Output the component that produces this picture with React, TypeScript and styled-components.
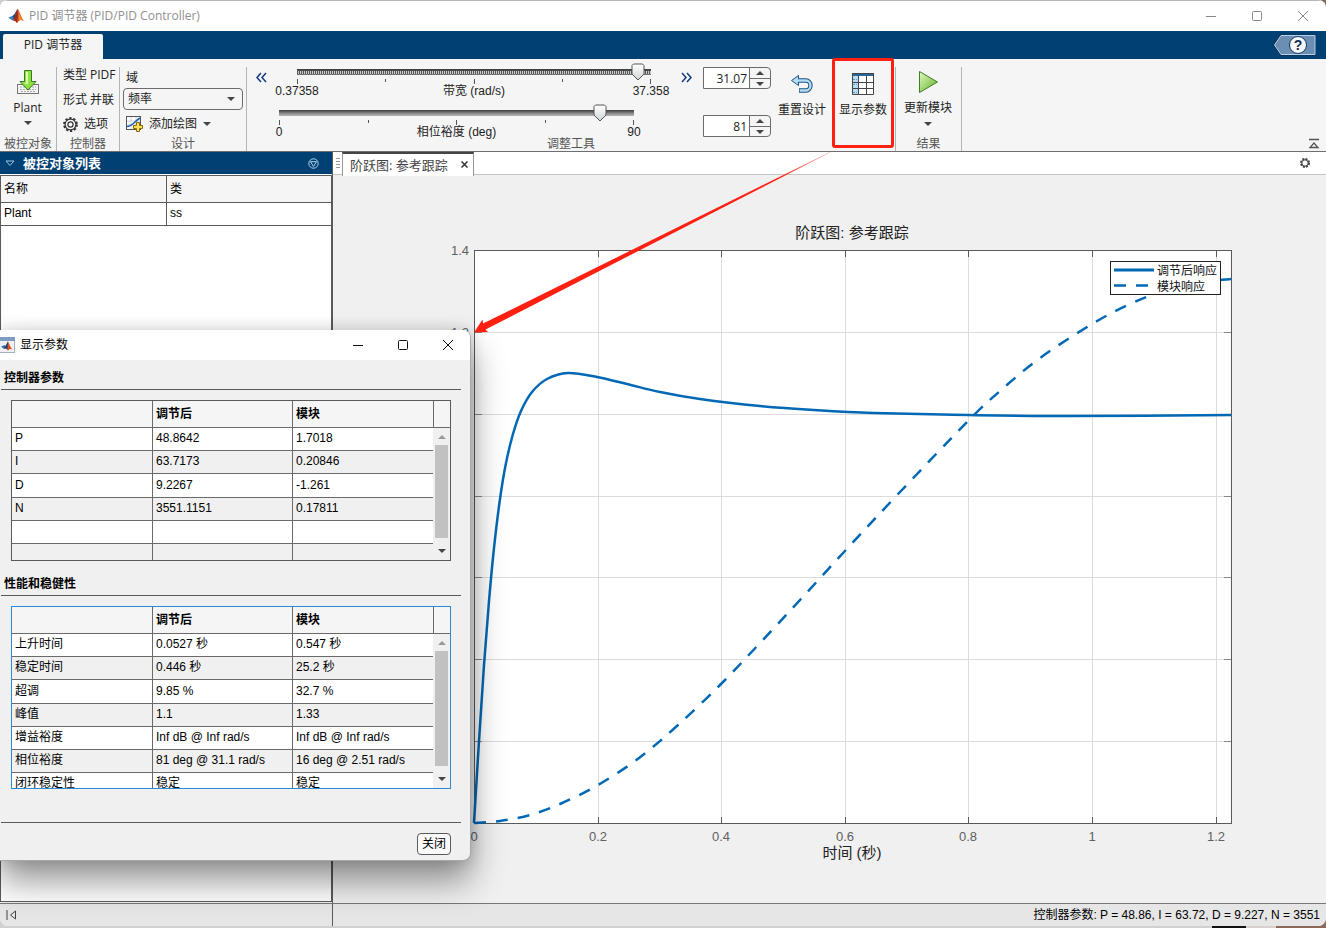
import React, { useState } from 'react';
import styled, { createGlobalStyle, css } from 'styled-components';

const ui = '"Open Sans", "Noto Sans CJK SC", sans-serif';
const arial = '"Liberation Sans", "Noto Sans CJK SC", sans-serif';
const navy = '#004073';
const line = '#5a5a5a';
const blue = '#0068b5';
const red = '#ff2012';

const GlobalStyle = createGlobalStyle`
  *, *::before, *::after { box-sizing: border-box; }
  html, body, #root { height: 100%; }
  body { margin: 0; background: linear-gradient(to left, #8c6a5a 50px, #d8d0cc 50px, #d8d0cc 80px, #111 80px, #111 114px, #d0d0d0 114px); overflow: hidden; }
  button, input, select { font: inherit; color: inherit; margin: 0; padding: 0; }
  button { background: none; border: 0; }
  svg { display: block; flex: none; }
`;

const AppWindow = styled.div`
  position: relative;
  display: flex;
  flex-direction: column;
  height: calc(100vh - 2px);
  min-height: 880px;
  border-radius: 8px;
  overflow: hidden;
  background: #f0f0f0;
  font: 12px/16px ${ui};
  color: #222;
`;

const TitleBar = styled.header`
  display: flex;
  align-items: center;
  height: 31px;
  padding: 0 16px 0 8px;
  gap: 5px;
  background: #fff;
  border-top: 1px solid #b8b8b8;
  color: #909090;
`;

const Title = styled.h1`
  flex: 1;
  margin: 0;
  font: inherit;
`;

const CaptionButtons = styled.div<{ $gap: number }>`
  display: flex;
  align-items: center;
  gap: ${(p) => p.$gap}px;
`;

const CaptionButton = styled.button`
  display: grid;
  place-items: center;
  width: 14px;
  height: 14px;
`;

const TabBand = styled.nav`
  display: flex;
  align-items: center;
  justify-content: space-between;
  height: 28px;
  padding: 0 9px 0 3px;
  background: ${navy};
`;

const RibbonTab = styled.button`
  align-self: flex-end;
  width: 100px;
  height: 25px;
  padding-bottom: 3px;
  border-radius: 2px 2px 0 0;
  background: #f5f5f5;
`;

const Toolstrip = styled.div`
  display: flex;
  flex: none;
  position: relative;
  height: 93px;
  padding-top: 8px;
  background: #f5f5f5;
  border-bottom: 1px solid #6e6e6e;
`;

const Section = styled.section<{ $width: number }>`
  display: flex;
  flex-direction: column;
  width: ${(p) => p.$width}px;
  border-right: 1px solid #b4b4b4;
`;

const SectionBody = styled.div<{ $row?: boolean; $pad?: string }>`
  display: flex;
  flex: 1;
  flex-direction: ${(p) => (p.$row ? 'row' : 'column')};
  padding: ${(p) => p.$pad ?? '0'};
  min-height: 0;
`;

const SectionLabel = styled.h2`
  margin: 0;
  font: inherit;
  line-height: 14px;
  text-align: center;
  white-space: nowrap;
  color: #555;
`;

const ToolButton = styled.button<{ $width: number; $top: number; $gap: number }>`
  display: flex;
  position: relative;
  flex-direction: column;
  align-items: center;
  gap: ${(p) => p.$gap}px;
  width: ${(p) => p.$width}px;
  padding-top: ${(p) => p.$top}px;
  white-space: nowrap;
`;

const Highlight = styled.span`
  position: absolute;
  inset: -9px 0 auto;
  height: 90px;
  border: 3px solid ${red};
  border-radius: 3px;
`;

const Line = styled.div<{ $height: number; $gap?: number }>`
  display: flex;
  align-items: center;
  gap: ${(p) => p.$gap ?? 3}px;
  height: ${(p) => p.$height}px;
  white-space: nowrap;
`;

const FlatButton = styled.button<{ $gap: number; $height: number }>`
  display: flex;
  align-items: center;
  gap: ${(p) => p.$gap}px;
  height: ${(p) => p.$height}px;
  white-space: nowrap;
`;

const SelectBox = styled.div`
  display: grid;
  align-items: center;
  margin: 0 0 0 -3px;
  width: 120px;
  height: 22px;
  & > * { grid-area: 1 / 1; }
  & > svg { justify-self: end; margin-right: 8px; pointer-events: none; }
`;

const Select = styled.select`
  appearance: none;
  width: 100%;
  height: 22px;
  padding-left: 4px;
  border: 1px solid #6b6b6b;
  border-radius: 4px;
  background: #f5f5f5;
`;

const Sliders = styled.div`
  display: flex;
  flex-direction: column;
  width: 445px;
`;

const SliderLine = styled.div<{ $indent: number }>`
  display: flex;
  flex: none;
  gap: 30px;
  height: 41px;
  padding-left: ${(p) => p.$indent}px;
`;

const Chevron = styled.button`
  width: 11px;
  height: 20px;
`;

const SliderBox = styled.div`
  position: relative;
  width: 355px;
`;

const Range = styled.input<{ $dotted?: boolean }>`
  display: block;
  appearance: none;
  width: 100%;
  height: 20px;
  background: linear-gradient(#3c3c3c, #8e8e8e 60%, #b4b4b4) 0 2px / 100% 6px no-repeat;
  ${(p) => p.$dotted && css`
    background:
      repeating-linear-gradient(90deg, #555 0 1px, #ccc 1px 2px) 0 4px / 100% 3px no-repeat,
      linear-gradient(#3c3c3c, #777) 0 2px / 100% 6px no-repeat;
  `}
  &::-webkit-slider-thumb { appearance: none; width: 13px; height: 20px; opacity: 0; }
`;

const Thumb = styled.svg`
  position: absolute;
  top: -4px;
  margin-left: -6px;
  pointer-events: none;
`;

const Ticks = styled.div`
  display: flex;
  justify-content: space-between;
  height: 5px;
  margin-top: -8px;
`;

const Tick = styled.i<{ $short: boolean }>`
  width: 1px;
  height: ${(p) => (p.$short ? 3 : 5)}px;
  background: #555;
`;

const Scale = styled.div`
  display: flex;
  justify-content: space-between;
  font: 12px/14px ${arial};
  & > * { width: 0; display: flex; justify-content: center; white-space: nowrap; }
`;

const Spinners = styled.div`
  display: flex;
  flex-direction: column;
  gap: 26px;
  width: 80px;
  padding-left: 11px;
`;

const Spinner = styled.div`
  display: grid;
  grid-template-columns: 46px 20px;
  width: 68px;
  height: 22px;
  border: 1px solid #6b6b6b;
  border-radius: 0 4px 4px 0;
`;

const SpinnerInput = styled.input`
  width: 46px;
  min-width: 0;
  padding: 2px 2px 0 0;
  border: 0;
  border-right: 1px solid #6b6b6b;
  background: #fff;
  text-align: right;
`;

const SpinnerButtons = styled.div`
  display: grid;
  grid-template-rows: 10px 10px;
  & > * + * { border-top: 1px solid #6b6b6b; }
`;

const SpinnerButton = styled.button`
  display: grid;
  place-items: center;
`;

const CollapseButton = styled.button`
  align-self: flex-end;
  margin: 0 6px 2px auto;
`;

const Workspace = styled.main`
  display: flex;
  flex: 1;
  min-height: 0;
`;

const Sidebar = styled.aside`
  display: flex;
  flex-direction: column;
  width: 333px;
  padding-bottom: 1px;
  border-right: 1px solid ${line};
`;

const SidebarHead = styled.div`
  display: flex;
  align-items: center;
  height: 23px;
  padding: 0 13px 0 5px;
  gap: 8px;
  background: ${navy};
  border-bottom: 1px solid #fff;
  color: #fff;
`;

const SidebarTitle = styled.h2`
  flex: 1;
  margin: 0;
  font: bold 13px/20px ${ui};
`;

const SidebarBody = styled.div`
  flex: 1;
  background: #fff;
  border: 1px solid ${line};
`;

const PlantTable = styled.table`
  width: 100%;
  table-layout: fixed;
  border-spacing: 0;
  font: 12px/14px ${arial};
  color: #000;
  th, td { padding: 0 0 3px 3px; height: 23px; border-bottom: 1px solid ${line}; text-align: left; }
  th { height: 27px; padding-bottom: 1px; background: #f5f5f5; font-weight: normal; }
  th + th, td + td { border-left: 1px solid ${line}; }
`;

const FigurePane = styled.div`
  display: flex;
  flex: 1;
  flex-direction: column;
  position: relative;
  min-width: 0;
`;

const DocBar = styled.div`
  display: flex;
  align-items: center;
  flex: none;
  height: 23px;
  padding: 0 16px 0 3px;
  background: #fff;
  border-bottom: 1px solid #c4c4c4;
`;

const DocTab = styled.div`
  display: flex;
  align-items: center;
  justify-content: space-between;
  width: 132px;
  height: 24px;
  margin: 1px auto 0 2px;
  padding: 0 5px 0 7px;
  border: solid #999;
  border-width: 2px 1px 0;
  border-top-color: #444;
  background: #fff;
  font-size: 13px;
  color: #444;
  white-space: nowrap;
`;

const Figure = styled.svg`
  flex: 1;
  width: 100%;
  min-height: 0;
`;

const CalloutArrow = styled.svg`
  position: absolute;
  top: 0;
  left: 0;
  z-index: 3;
  pointer-events: none;
`;

const StatusBar = styled.footer`
  display: flex;
  flex: none;
  height: 23px;
  border-top: 1px solid #777;
  background: #e6e6e6;
  font: 12px/23px ${arial};
  color: #000;
`;

const StatusLeft = styled.div`
  display: flex;
  align-items: center;
  width: 333px;
  padding-left: 6px;
  border-right: 1px solid ${line};
`;

const StatusText = styled.div`
  flex: 1;
  padding-right: 6px;
  text-align: right;
`;

const Dialog = styled.div`
  position: absolute;
  left: 0;
  top: 330px;
  z-index: 2;
  width: 471px;
  padding-bottom: 5px;
  border: solid #a8a8a8;
  border-width: 0 1px 1px 0;
  border-radius: 0 8px 8px 0;
  background: #f0f0f0;
  box-shadow: 0 20px 34px rgba(0, 0, 0, 0.42), 0 0 16px rgba(0, 0, 0, 0.14);
  color: #000;
`;

const DialogBar = styled.div`
  display: flex;
  align-items: center;
  height: 30px;
  padding-right: 15px;
  gap: 5px;
  border-radius: 0 8px 0 0;
  background: #fff;
`;

const DialogTitle = styled.h2`
  flex: 1;
  margin: 0;
  font: inherit;
`;

const GroupTitle = styled.h3`
  margin: 0 9px 10px 1px;
  padding: 9px 0 3px 3px;
  border-bottom: 1px solid ${line};
  font: bold 12px/17px ${ui};
`;

const TableFrame = styled.div<{ $height: number; $color: string; $after: number }>`
  position: relative;
  width: 440px;
  height: ${(p) => p.$height}px;
  margin: 0 0 ${(p) => p.$after}px 11px;
  border: 1px solid ${(p) => p.$color};
  overflow: hidden;
  background: #f0f0f0;
`;

const DataTable = styled.table`
  width: 438px;
  table-layout: fixed;
  border-spacing: 0;
  font: 12px/14px ${arial};
  th, td { height: 23px; padding: 0 0 2px 3px; border: solid #6a6a6a; border-width: 0 1px 1px 0; text-align: left; white-space: nowrap; }
  th { height: 27px; padding-bottom: 1px; background: #f5f5f5; font-weight: bold; }
  th:last-child { border-right: 0; }
  td:nth-child(3) { border-right: 0; }
  td:nth-child(4) { border: 0; }
  tbody tr:nth-child(odd) td { background: #fff; }
  tbody tr:nth-child(3) td { height: 24px; }
`;

const ScrollBar = styled.div`
  position: absolute;
  top: 27px;
  right: 0;
  bottom: 0;
  width: 17px;
  display: flex;
  flex-direction: column;
  align-items: center;
  justify-content: space-between;
  padding: 7px 0;
  background: #f0f0f0;
`;

const ScrollThumb = styled.div`
  flex: 1;
  width: 13px;
  margin: 6px 0 11px;
  background: #c1c1c1;
`;

const DialogFoot = styled.div`
  display: flex;
  justify-content: flex-end;
  margin: 0 9px 0 1px;
  padding: 10px 10px 0 0;
  border-top: 1px solid ${line};
`;

const CloseButton = styled.button`
  width: 34px;
  height: 22px;
  border: 1px solid ${line};
  border-radius: 4px;
  background: #fafafa;
`;

const MatlabLogo = ({ size }: { size: number }) => (
  <svg width={size} height={size} viewBox="0 0 16 16" aria-hidden="true">
    <path d="M0.2 9.800 4.600 7.800 7 10 4.600 12.600z" fill="#3d7fb8" />
    <path d="M4.600 7.800C6.500 7 7.600 3.200 9.600 1L7.600 9.200 6 11.400z" fill="#20477e" />
    <path d="M9.600 1C11.200 2 12.600 8 15.800 13 13 11 11.500 11.800 9 15.200 8 13.200 7.200 12.200 4.800 12.600 7.600 9.600 7.800 4.400 9.600 1z" fill="#dd5a24" />
    <path d="M9.600 1C10.400 5 9.800 10.500 9 15.200 7.800 13 7 12.200 4.800 12.600 7.600 9.600 7.800 4.400 9.600 1z" fill="#a1261c" />
    <path d="M10.600 3C11.400 6 12.400 9.400 15.800 13 13.600 11.600 12 11.600 10.800 12.800z" fill="#f08a2a" />
  </svg>
);

const CaptionIcons = ({ gap, color }: { gap: number; color: string }) => (
  <CaptionButtons $gap={gap}>
    <CaptionButton aria-label="Minimize"><svg width="10" height="10" stroke={color} fill="none"><path d="M0 5.5h10" /></svg></CaptionButton>
    <CaptionButton aria-label="Maximize"><svg width="10" height="10" stroke={color} fill="none"><rect x="0.5" y="0.5" width="9" height="9" rx="1" /></svg></CaptionButton>
    <CaptionButton aria-label="Close"><svg width="12" height="12" stroke={color} fill="none"><path d="M1 1l10 10M11 1L1 11" /></svg></CaptionButton>
  </CaptionButtons>
);

const Arrow = ({ up, color = '#444' }: { up?: boolean; color?: string }) => (
  <svg width="8" height="4" fill={color} aria-hidden="true"><path d={up ? 'M0 4h8L4 0z' : 'M0 0h8L4 4z'} /></svg>
);

const DownloadIcon = () => (
  <svg width="24" height="26" viewBox="0 0 24 26">
    <rect x="1.500" y="15.500" width="21" height="9" fill="#f4f4f4" stroke="#777" />
    <path d="M4 18h16M4 20.500h16M5 22.500h14" stroke="#aaa" strokeDasharray="2 1" />
    <path d="M8.500 1.500h7v11h4.500L12 21 4 12.500h4.500z" fill="#8fe042" stroke="#2f7d1c" />
    <path d="M10 3h2v12H8l2-1z" fill="#dcf9b0" />
  </svg>
);

const GearIcon = () => (
  <svg width="15" height="15" viewBox="0 0 15 15" fill="none" stroke="#333">
    <circle cx="7.500" cy="7.500" r="6.500" strokeWidth="1.800" strokeDasharray="2.300 1.784" />
    <circle cx="7.500" cy="7.500" r="5.400" strokeWidth="1.200" />
    <circle cx="7.500" cy="7.500" r="2.600" strokeWidth="1.200" />
  </svg>
);

const AddPlotIcon = () => (
  <svg width="17" height="16" viewBox="0 0 17 16">
    <rect x="0.500" y="0.500" width="14" height="13" fill="#fff" stroke="#555" />
    <path d="M1 5h13M1 9h13M5 1v12M10 1v12" stroke="#ccd" />
    <path d="M1 10.500C6 10.500 9 5 14 2" fill="none" stroke="#1d5fa8" strokeWidth="1.600" />
    <path d="M10.500 6.500h3v3h3v3h-3v3h-3v-3h-3v-3h3z" fill="#ffe34d" stroke="#8a6a10" />
  </svg>
);

const UndoIcon = () => (
  <svg width="24" height="20" viewBox="0 0 24 20" fill="none" strokeLinejoin="round">
    <path d="M7 6.500H16a4.500 5 0 0 1 0 10H9" stroke="#1c5386" strokeWidth="4.400" />
    <path d="M8.500 1.500v10L1.500 6.500z" fill="#b5dcf5" stroke="#1c5386" />
    <path d="M6 6.500H16a4.500 5 0 0 1 0 10H9.700" stroke="#b5dcf5" strokeWidth="2.400" />
  </svg>
);

const TableIcon = () => (
  <svg width="24" height="24" viewBox="0 0 24 24">
    <rect x="1" y="1" width="22" height="22" fill="#fff" />
    <path d="M1 4h6v19H1z" fill="#b8dcf2" />
    <path d="M2 7.500h4M2 12.500h4M2 16.500h4M2 20.500h4" stroke="#5a9cc8" strokeDasharray="2 1" />
    <path d="M1 1h22v3H1z" fill="#2b6796" />
    <path d="M1.500 10.500h21M1.500 16.500h21M7.500 4v19M15.500 4v19M1.500 1.500h21v21h-21z" fill="none" stroke="#444" />
  </svg>
);

const PlayIcon = () => (
  <svg width="22" height="24" viewBox="0 0 22 24">
    <defs><linearGradient id="play" x2="1" y2="1"><stop offset="0" stopColor="#e4f9c4" /><stop offset="1" stopColor="#5cb021" /></linearGradient></defs>
    <path d="M2.500 1.500v21L20.500 12z" fill="url(#play)" stroke="#3e7d23" strokeLinejoin="round" />
  </svg>
);

const RoundMenuIcon = ({ color }: { color: string }) => (
  <svg width="11" height="11" viewBox="0 0 11 11" fill="none" stroke={color}>
    <circle cx="5.500" cy="5.500" r="4.700" /><path d="M2.500 3.700h6L5.500 8.500z" />
  </svg>
);

interface SliderProps { label: string; min: string; max: string; fraction: number; dotted?: boolean; onMove: (f: number) => void }

const Slider = ({ label, min, max, fraction, dotted, onMove }: SliderProps) => (
  <SliderBox>
    <Range type="range" min={0} max={1} step={0.001} $dotted={dotted} aria-label={label} value={fraction} onChange={(e) => onMove(Number(e.target.value))} />
    <Thumb width="14" height="18" viewBox="0 0 14 18" style={{ left: `${fraction * 100}%` }}>
      <defs><linearGradient id="thumb" x2="0" y2="1"><stop offset="0" stopColor="#fff" /><stop offset="1" stopColor="#cfd4d6" /></linearGradient></defs>
      <path d="M1 2.500l1.500-1.500h9l1.500 1.500v8.500L7 17 1 11z" fill="url(#thumb)" stroke="#555" />
    </Thumb>
    <Ticks>{[0, 1, 2, 3, 4].map((i) => <Tick key={i} $short={i % 2 === 1} />)}</Ticks>
    <Scale><span>{min}</span><span>{label}</span><span>{max}</span></Scale>
  </SliderBox>
);

interface SpinProps { label: string; value: number; step: number; digits: number; onChange: (v: number) => void }

const Spin = ({ label, value, step, digits, onChange }: SpinProps) => (
  <Spinner>
    <SpinnerInput aria-label={label} value={value.toFixed(digits)} onChange={(e) => onChange(Number(e.target.value) || 0)} />
    <SpinnerButtons>
      <SpinnerButton aria-label="Increase" onClick={() => onChange(value + step)}><Arrow up /></SpinnerButton>
      <SpinnerButton aria-label="Decrease" onClick={() => onChange(value - step)}><Arrow /></SpinnerButton>
    </SpinnerButtons>
  </Spinner>
);

type Point = [number, number];

// Catmull-Rom spline through the samples, written as cubic Bezier segments.
const spline = (pts: Point[]) =>
  pts.slice(0, -1).reduce((d, p, i) => {
    const a = pts[i - 1] ?? p;
    const b = pts[i + 1];
    const c = pts[i + 2] ?? b;
    return `${d}C${p[0] + (b[0] - a[0]) / 6} ${p[1] + (b[1] - a[1]) / 6} ${b[0] - (c[0] - p[0]) / 6} ${b[1] - (c[1] - p[1]) / 6} ${b[0]} ${b[1]}`;
  }, `M${pts[0][0]} ${pts[0][1]}`);

const tuned: Point[] = [
  [0, 573], [5, 491], [10, 415], [15, 351], [20, 298], [26, 249], [32, 213], [39, 184], [47, 161], [58, 142], [73, 129],
  [94, 123], [123, 127], [153, 134], [186, 142], [226, 149], [286, 156], [340, 160], [400, 163], [494, 165], [600, 166], [757, 165],
];
const block: Point[] = [
  [0, 573], [26, 571], [56, 565], [86, 554], [124, 535], [165, 508], [204, 475], [247, 434], [286, 393],
  [326, 350], [370, 302], [426, 242], [494, 171], [526, 141], [566, 108], [618, 74], [656, 54], [690, 41], [730, 32], [757, 29],
];
const xTicks = [0, 124, 247, 371, 494, 618, 742];
const xNames = ['0', '0.2', '0.4', '0.6', '0.8', '1', '1.2'];
const yTicks = [82, 164, 246, 327, 409, 491];

const StepPlot = () => (
  <Figure viewBox="0 0 993 728" role="img" aria-label="阶跃图: 参考跟踪">
    <g transform="translate(141 75)" fontFamily={arial}>
      <rect x="0.500" y="0.500" width="757" height="573" fill="#fff" stroke={line} />
      {xTicks.slice(1).map((x) => (
        <g key={x}>
          <path d={`M${x + 0.5} 1v572`} stroke="#dcdcdc" />
          <path d={`M${x + 0.5} 1v6M${x + 0.5} 567v6`} stroke={line} />
        </g>
      ))}
      {yTicks.map((y) => (
        <g key={y}>
          <path d={`M1 ${y + 0.5}h756`} stroke="#dcdcdc" />
          <path d={`M1 ${y + 0.5}h7M750 ${y + 0.5}h7`} stroke="#888" />
        </g>
      ))}
      <path d={spline(tuned)} fill="none" stroke={blue} strokeWidth="2.500" />
      <path d={spline(block)} fill="none" stroke={blue} strokeWidth="2.500" strokeDasharray="12 10" />
      <g fontSize="13" fill="#606060">
        {xTicks.map((x, i) => <text key={x} x={x} y="591" textAnchor="middle">{xNames[i]}</text>)}
        <text x="-5" y="5" textAnchor="end">1.4</text>
        <text x="-5" y="87" textAnchor="end">1.2</text>
      </g>
      <g fontSize="15" fill="#222" textAnchor="middle">
        <text x="378" y="-12">阶跃图: 参考跟踪</text>
        <text x="378" y="608">时间 (秒)</text>
      </g>
      <rect x="636.500" y="11.500" width="110" height="33" fill="#fff" stroke="#222" />
      <path d="M640 20h40" stroke={blue} strokeWidth="3" />
      <path d="M640 35.500h40" stroke={blue} strokeWidth="2.500" strokeDasharray="12 10" />
      <g fontSize="12" fill="#111"><text x="683" y="25">调节后响应</text><text x="683" y="41">模块响应</text></g>
    </g>
  </Figure>
);

const gains = [['P', '48.8642', '1.7018'], ['I', '63.7173', '0.20846'], ['D', '9.2267', '-1.261'], ['N', '3551.1151', '0.17811'], ['', '', ''], ['', '', '']];
const performance = [
  ['上升时间', '0.0527 秒', '0.547 秒'], ['稳定时间', '0.446 秒', '25.2 秒'], ['超调', '9.85 %', '32.7 %'], ['峰值', '1.1', '1.33'],
  ['增益裕度', 'Inf dB @ Inf rad/s', 'Inf dB @ Inf rad/s'], ['相位裕度', '81 deg @ 31.1 rad/s', '16 deg @ 2.51 rad/s'], ['闭环稳定性', '稳定', '稳定'],
];

const ParameterTable = ({ rows, height, color, after }: { rows: string[][]; height: number; color: string; after: number }) => (
  <TableFrame $height={height} $color={color} $after={after}>
    <DataTable>
      <colgroup><col width="141" /><col width="140" /><col width="141" /><col /></colgroup>
      <thead><tr><th /><th>调节后</th><th>模块</th><th /></tr></thead>
      <tbody>{rows.map((r, i) => <tr key={i}>{r.map((c, j) => <td key={j}>{c}</td>)}<td /></tr>)}</tbody>
    </DataTable>
    <ScrollBar><Arrow up color="#999" /><ScrollThumb /><Arrow /></ScrollBar>
  </TableFrame>
);

export default function App() {
  const [bandwidth, setBandwidth] = useState(31.07);
  const [phase, setPhase] = useState(81);
  const low = 0.37358;

  return (
    <>
      <GlobalStyle />
      <AppWindow>
        <TitleBar>
          <MatlabLogo size={16} />
          <Title>PID 调节器 (PID/PID Controller)</Title>
          <CaptionIcons gap={32} color="#888" />
        </TitleBar>
        <TabBand>
          <RibbonTab>PID 调节器</RibbonTab>
          <button aria-label="Help">
            <svg width="45" height="24" viewBox="0 0 45 24">
              <path d="M1 12 8.500 1.500H44v21H8.500z" fill="#0a2c55" />
              <path d="M2.500 12 9 2.500H43v19H9z" fill="#6a8fb2" stroke="#b9d2ea" />
              <circle cx="26" cy="12" r="8.500" fill="#f6f8fa" stroke="#0f3866" />
              <text x="26" y="17" textAnchor="middle" fontFamily={arial} fontWeight="bold" fontSize="14" fill="#112c50">?</text>
            </svg>
          </button>
        </TabBand>
        <Toolstrip>
          <Section $width={57}>
            <SectionBody>
              <ToolButton $width={55} $top={2} $gap={5}><DownloadIcon /><span>Plant</span><Arrow /></ToolButton>
            </SectionBody>
            <SectionLabel>被控对象</SectionLabel>
          </Section>
          <Section $width={63}>
            <SectionBody $pad="0 0 0 6px">
              <Line $height={16}><span>类型</span><span>PIDF</span></Line>
              <Line $height={33}><span>形式</span><span>并联</span></Line>
              <FlatButton $gap={6} $height={16}><GearIcon />选项</FlatButton>
            </SectionBody>
            <SectionLabel>控制器</SectionLabel>
          </Section>
          <Section $width={127}>
            <SectionBody $pad="0 0 0 6px">
              <Line $height={21} as="label" htmlFor="domain">域</Line>
              <SelectBox>
                <Select id="domain" defaultValue="f"><option value="f">频率</option><option value="t">时间</option></Select>
                <Arrow />
              </SelectBox>
              <FlatButton $gap={6} $height={27}><AddPlotIcon />添加绘图<Arrow /></FlatButton>
            </SectionBody>
            <SectionLabel>设计</SectionLabel>
          </Section>
          <Section $width={649}>
            <SectionBody $row>
              <Sliders>
                <SliderLine $indent={9}>
                  <Chevron aria-label="Slower"><svg width="11" height="11" fill="none" stroke="#143a80" strokeWidth="1.500"><path d="M5 1 1 5.500 5 10M10 1 6 5.500 10 10" /></svg></Chevron>
                  <Slider label="带宽 (rad/s)" min="0.37358" max="37.358" dotted fraction={Math.log(bandwidth / low) / Math.log(100)} onMove={(f) => setBandwidth(low * 100 ** f)} />
                  <Chevron aria-label="Faster"><svg width="11" height="11" fill="none" stroke="#143a80" strokeWidth="1.500"><path d="M1 1l4 4.500L1 10M6 1l4 4.500L6 10" /></svg></Chevron>
                </SliderLine>
                <SliderLine $indent={32}>
                  <Slider label="相位裕度 (deg)" min="0" max="90" fraction={phase / 90} onMove={(f) => setPhase(Math.round(f * 90))} />
                </SliderLine>
              </Sliders>
              <Spinners>
                <Spin label="带宽" value={bandwidth} step={0.1} digits={2} onChange={setBandwidth} />
                <Spin label="相位裕度" value={phase} step={1} digits={0} onChange={setPhase} />
              </Spinners>
              <ToolButton $width={60} $top={7} $gap={8}><UndoIcon /><span>重置设计</span></ToolButton>
              <ToolButton $width={62} $top={5} $gap={6}><TableIcon /><span>显示参数</span><Highlight /></ToolButton>
            </SectionBody>
            <SectionLabel>调整工具</SectionLabel>
          </Section>
          <Section $width={66}>
            <SectionBody>
              <ToolButton $width={64} $top={3} $gap={6}><PlayIcon /><span>更新模块</span><Arrow /></ToolButton>
            </SectionBody>
            <SectionLabel>结果</SectionLabel>
          </Section>
          <CollapseButton aria-label="Collapse"><svg width="12" height="11" fill="none" stroke="#555"><path d="M1 1.500h10" strokeWidth="1.500" /><path d="M2 9.500h8L6 5z" strokeWidth="1.300" /></svg></CollapseButton>
        </Toolstrip>
        <Workspace>
          <Sidebar>
            <SidebarHead>
              <svg width="10" height="7" fill="none" stroke="#9cc4e4"><path d="M1 1h8L5 5.500z" /></svg>
              <SidebarTitle>被控对象列表</SidebarTitle>
              <RoundMenuIcon color="#b4d4ee" />
            </SidebarHead>
            <SidebarBody>
              <PlantTable>
                <thead><tr><th>名称</th><th>类</th></tr></thead>
                <tbody><tr><td>Plant</td><td>ss</td></tr></tbody>
              </PlantTable>
            </SidebarBody>
          </Sidebar>
          <FigurePane>
            <DocBar>
              <svg width="4" height="10" stroke="#999"><path d="M0 .5h4M0 3.500h4M0 6.500h4M0 9.500h4" /></svg>
              <DocTab>
                <span>阶跃图: 参考跟踪</span>
                <button aria-label="Close tab"><svg width="7" height="7" stroke="#333" strokeWidth="1.500"><path d="M.5.5l6 6M6.500.5l-6 6" /></svg></button>
              </DocTab>
              <svg width="10" height="10" viewBox="0 0 10 10" fill="none" stroke="#444"><circle cx="5" cy="5" r="4" strokeWidth="2" strokeDasharray="2 1.140" /><circle cx="5" cy="5" r="3.200" /></svg>
            </DocBar>
            <StepPlot />
            <CalloutArrow width="500" height="186" viewBox="0 0 500 186">
              <defs><linearGradient id="fade" x1="1" x2="0"><stop offset="0" stopColor={red} stopOpacity=".4" /><stop offset=".15" stopColor={red} /></linearGradient></defs>
              <path d="M497 0 150 171.500 149.500 167.500 141 180.500 155 180 152.500 177.500 497 .5z" fill="url(#fade)" />
            </CalloutArrow>
          </FigurePane>
        </Workspace>
        <StatusBar>
          <StatusLeft>
            <svg width="11" height="10" fill="none" stroke="#444"><path d="M1 0v10M9.500 1v8L4.500 5z" /></svg>
          </StatusLeft>
          <StatusText>控制器参数: P = 48.86, I = 63.72, D = 9.227, N = 3551</StatusText>
        </StatusBar>
        <Dialog role="dialog" aria-label="显示参数">
          <DialogBar>
            <svg width="15" height="16" viewBox="0 0 15 16">
              <rect x="-1.500" y="0.500" width="16" height="15" fill="#eef0f4" stroke="#a8b0bc" /><path d="M0 0h15v4H0z" fill="#7f9cc0" />
              <path d="M1 9.500 5 8 6 11 4 12z" fill="#2f74b5" /><path d="M4 11.500C6 9 7 6 8 4.500 9.500 7 10 10 12.500 12.500 10 11.500 9 12 8 14 7 12 6 11.500 4 11.500z" fill="#d9531e" /><path d="M4 11C6 9 7 6 8 4.500L7.500 12z" fill="#1e3f74" />
            </svg>
            <DialogTitle>显示参数</DialogTitle>
            <CaptionIcons gap={31} color="#111" />
          </DialogBar>
          <GroupTitle>控制器参数</GroupTitle>
          <ParameterTable rows={gains} height={161} color={line} after={5} />
          <GroupTitle>性能和稳健性</GroupTitle>
          <ParameterTable rows={performance} height={183} color="#2a8ad8" after={33} />
          <DialogFoot><CloseButton>关闭</CloseButton></DialogFoot>
        </Dialog>
      </AppWindow>
    </>
  );
}
